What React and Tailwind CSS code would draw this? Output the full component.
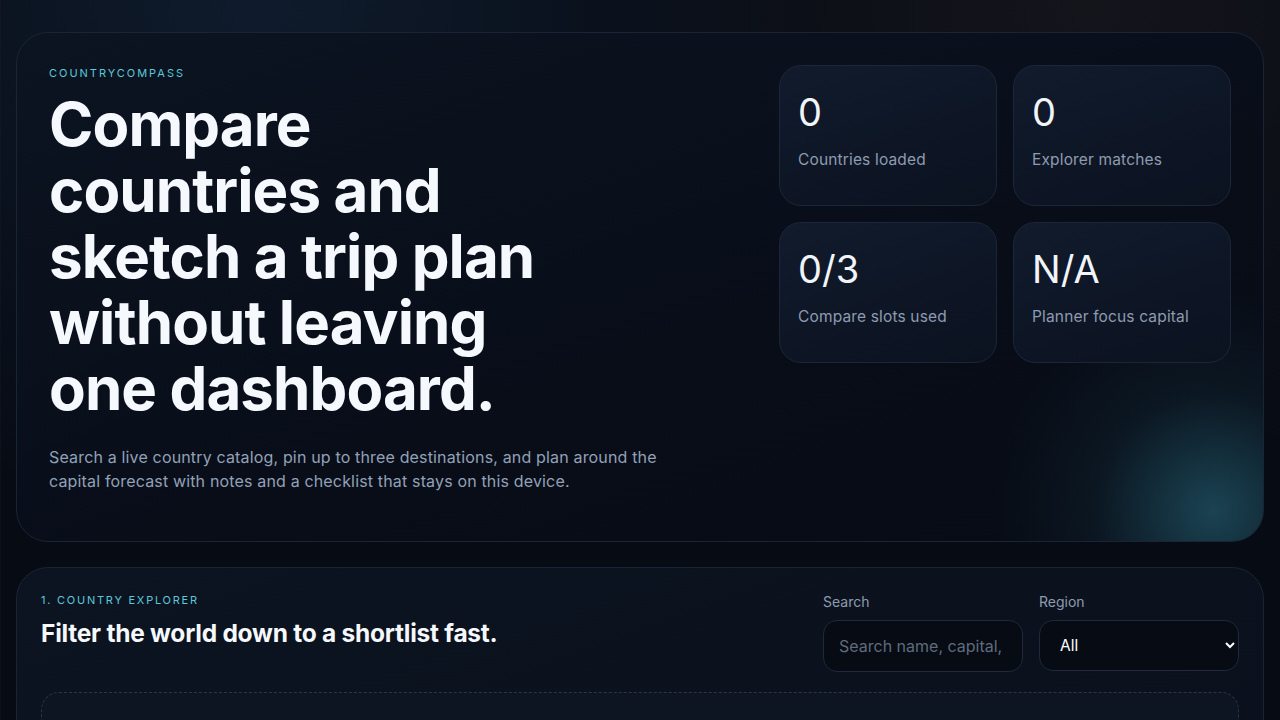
import { useState } from "react";

const stats = [
  { value: "0", label: "Countries loaded" },
  { value: "0", label: "Explorer matches" },
  { value: "0/3", label: "Compare slots used" },
  { value: "N/A", label: "Planner focus capital" },
];

function StatCard({ value, label }) {
  return (
    <div className="h-[141px] rounded-[22px] border border-[#1c2638] bg-[linear-gradient(160deg,#111b2c,#0b1220)] px-[18px] pt-[26px]">
      <div className="text-[38px] leading-[1.1] font-normal text-[#f1f5f9]">{value}</div>
      <div className="mt-[14px] text-[15.5px] tracking-[0.01em] text-[#8e9bb0]">{label}</div>
    </div>
  );
}

export default function App() {
  const [search, setSearch] = useState("");
  const [region, setRegion] = useState("All");

  return (
    <div
      className="min-h-screen px-4 pt-8 pb-10 text-white [font-family:Inter,'Noto_Sans',sans-serif] [background:radial-gradient(circle_at_20%_0%,rgba(30,58,90,0.35),transparent_40%),radial-gradient(circle_at_85%_0%,rgba(60,50,50,0.25),transparent_35%),linear-gradient(to_right,rgba(148,163,184,0.035)_1px,transparent_1px),#070b14] [background-size:auto,auto,30px_30px,auto]"
    >
      {/* Hero */}
      <section className="rounded-[32px] border border-[#1a2434] p-8 pb-12 [background:radial-gradient(circle_at_96%_94%,rgba(40,104,124,0.6),rgba(20,50,64,0.28)_120px,transparent_220px),linear-gradient(160deg,#0c1421,#080d18_60%,#070b14)]">
        <div className="grid grid-cols-[1fr_452px] gap-8 items-start">
          <div>
            <p className="text-[11px] leading-4 tracking-[0.18em] text-[#5cc8da] uppercase">
              CountryCompass
            </p>
            <h1 className="mt-[10px] text-[60px] leading-[66px] font-bold tracking-[-0.015em] text-[#f5f8fc]">
              Compare
              <br />
              countries and
              <br />
              sketch a trip plan
              <br />
              without leaving
              <br />
              one dashboard.
            </h1>
            <p className="mt-6 max-w-[640px] text-[16px] leading-6 tracking-[0.01em] text-[#93a1b8]">
              Search a live country catalog, pin up to three destinations, and plan around the
              capital forecast with notes and a checklist that stays on this device.
            </p>
          </div>
          <div className="grid grid-cols-2 gap-4">
            {stats.map((s) => (
              <StatCard key={s.label} value={s.value} label={s.label} />
            ))}
          </div>
        </div>
      </section>

      {/* Explorer */}
      <section className="mt-[25px] rounded-[32px] border border-[#1a2434] bg-[linear-gradient(160deg,#0c1421,#0a101b)] px-6 pt-6 pb-6">
        <div className="flex items-start justify-between">
          <div>
            <p className="text-[11px] leading-4 tracking-[0.16em] text-[#5cc8da] uppercase">
              1. Country explorer
            </p>
            <h2 className="mt-[9px] text-[24.5px] leading-8 font-bold tracking-[-0.01em] text-[#f5f8fc]">
              Filter the world down to a shortlist fast.
            </h2>
          </div>
          <div className="flex gap-4">
            <label className="flex w-[200px] flex-col gap-2">
              <span className="text-[14px] leading-5 text-[#8e9bb0]">Search</span>
              <input
                value={search}
                onChange={(e) => setSearch(e.target.value)}
                placeholder="Search name, capital, or code"
                className="h-[52px] rounded-[14px] border border-[#1e293b] bg-[#070b14] px-[15px] text-[16px] text-white outline-none placeholder:text-[#5f6b7d]"
              />
            </label>
            <label className="flex w-[200px] flex-col gap-2">
              <span className="text-[14px] leading-5 text-[#8e9bb0]">Region</span>
              <select
                value={region}
                onChange={(e) => setRegion(e.target.value)}
                className="h-[51px] rounded-[14px] border border-[#1e293b] bg-[#070b14] pl-4 pr-2 text-[15.5px] text-white outline-none [color-scheme:dark]"
              >
                <option>All</option>
                <option>Africa</option>
                <option>Americas</option>
                <option>Asia</option>
                <option>Europe</option>
                <option>Oceania</option>
              </select>
            </label>
          </div>
        </div>
        <div className="mt-5 h-[140px] rounded-[18px] border border-dashed border-[#2a3547] bg-[#0d1522]" />
      </section>
    </div>
  );
}
